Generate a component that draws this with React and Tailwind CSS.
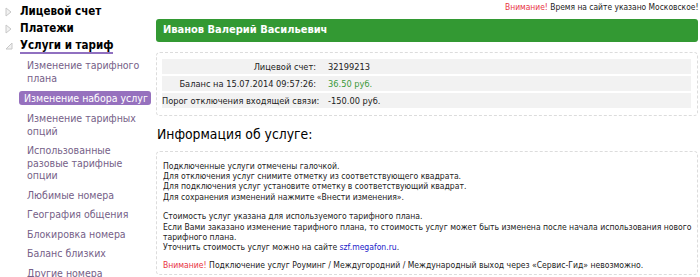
import React from "react";

const F = { fontFamily: '"DejaVu Sans Condensed", "DejaVu Sans", sans-serif' };

function Arrow({ open }) {
  if (open) {
    return (
      <svg width="8" height="8" viewBox="0 0 8 8" className="shrink-0">
        <polygon points="7,1 7,7 1,7" fill="#f2f2f2" stroke="#c8c8c8" strokeWidth="1" strokeLinejoin="round" />
      </svg>
    );
  }
  return (
    <svg width="7" height="10" viewBox="0 0 7 10" className="shrink-0">
      <polygon points="1,1 6,5 1,9" fill="#f2f2f2" stroke="#c8c8c8" strokeWidth="1" strokeLinejoin="round" />
    </svg>
  );
}

const sub = [
  ["Изменение тарифного", "плана"],
  ["Изменение набора услуг"],
  ["Изменение тарифных", "опций"],
  ["Использованные", "разовые тарифные", "опции"],
  ["Любимые номера"],
  ["География общения"],
  ["Блокировка номера"],
  ["Баланс близких"],
  ["Другие номера"],
];

export default function App() {
  return (
    <div className="w-[700px] h-[277px] overflow-hidden bg-white flex text-[#333]" style={F}>
      <div className="w-[156px] shrink-0 pl-[5px] pt-[3px]">
        <div className="flex items-center gap-[8px] h-[17px]">
          <Arrow />
          <span className="text-[11.5px] font-bold text-black">Лицевой счет</span>
        </div>
        <div className="flex items-center gap-[8px] h-[17px]">
          <Arrow />
          <span className="text-[11.5px] font-bold text-black">Платежи</span>
        </div>
        <div className="flex items-center gap-[7px] h-[17px]">
          <Arrow open />
          <span className="text-[11.5px] font-bold text-black border-b-2 border-[#9070c0] leading-[14px]">Услуги и тариф</span>
        </div>
        <div className="mt-[5px] flex flex-col gap-[7px] text-[10.5px] leading-[12.5px] text-[#765f88]">
          {sub.map((lines, i) =>
            i === 1 ? (
              <div key={i} className="ml-[14px] w-[132px] bg-[#9671be] text-white rounded-[3px] pl-[5px] leading-[14px] whitespace-nowrap">
                {lines[0]}
              </div>
            ) : (
              <div key={i} className="pl-[22px]">
                {lines.map((l, j) => (
                  <div key={j}>{l}</div>
                ))}
              </div>
            )
          )}
        </div>
      </div>

      <div className="flex-1 pr-[6px]">
        <div className="text-right text-[8.4px] leading-[11px] h-[19px] pt-[2px] text-[#222]">
          <span className="text-[#e8333f]">Внимание!</span> Время на сайте указано Московское!
        </div>
        <div className="h-[23px] bg-[#339933] rounded-[3px] flex items-center pl-[7px] text-white font-bold text-[11px]">
          Иванов Валерий Васильевич
        </div>
        <div className="mt-[10px] border border-dashed border-[#dcdcdc] rounded-[4px] pl-[5px] pr-[6px] pt-[6px] pb-[7px] flex flex-col gap-[2px] text-[9.2px] text-[#222]">
          <div className="flex h-[15px] items-center bg-[#f2f2f2]">
            <div className="w-[160px] text-right pr-[6px] whitespace-nowrap">Лицевой счет:</div>
            <div className="pl-[6px]">32199213</div>
          </div>
          <div className="flex h-[15px] items-center bg-[#f2f2f2]">
            <div className="w-[160px] text-right pr-[6px] whitespace-nowrap">Баланс на 15.07.2014 09:57:26:</div>
            <div className="pl-[6px] text-[#3a9a3a]">36.50 руб.</div>
          </div>
          <div className="flex h-[15px] items-center bg-[#f2f2f2]">
            <div className="w-[160px] text-right pr-[6px] whitespace-nowrap">Порог отключения входящей связи:</div>
            <div className="pl-[6px]">-150.00 руб.</div>
          </div>
        </div>
        <div className="mt-[9px] text-[13.8px] leading-[18px] text-black pl-[1px]">Информация об услуге:</div>
        <div className="mt-[8px] border border-dashed border-[#dcdcdc] rounded-[4px] px-[6px] pt-[9px] pb-[4px] text-[8.55px] leading-[10.2px] text-[#222]">
          <div>Подключенные услуги отмечены галочкой.</div>
          <div>Для отключения услуг снимите отметку из соответствующего квадрата.</div>
          <div>Для подключения услуг установите отметку в соответствующий квадрат.</div>
          <div>Для сохранения изменений нажмите «Внести изменения».</div>
          <div className="h-[9.5px]" />
          <div>Стоимость услуг указана для используемого тарифного плана.</div>
          <div className="whitespace-nowrap">Если Вами заказано изменение тарифного плана, то стоимость услуг может быть изменена после начала использования нового</div>
          <div>тарифного плана.</div>
          <div>
            Уточнить стоимость услуг можно на сайте <span className="text-[#2020c8]">szf.megafon.ru</span>.
          </div>
          <div className="h-[7.5px]" />
          <div>
            <span className="text-[#e8333f]">Внимание!</span> Подключение услуг Роуминг / Междугородний / Международный выход через «Сервис-Гид» невозможно.
          </div>
        </div>
      </div>
    </div>
  );
}
